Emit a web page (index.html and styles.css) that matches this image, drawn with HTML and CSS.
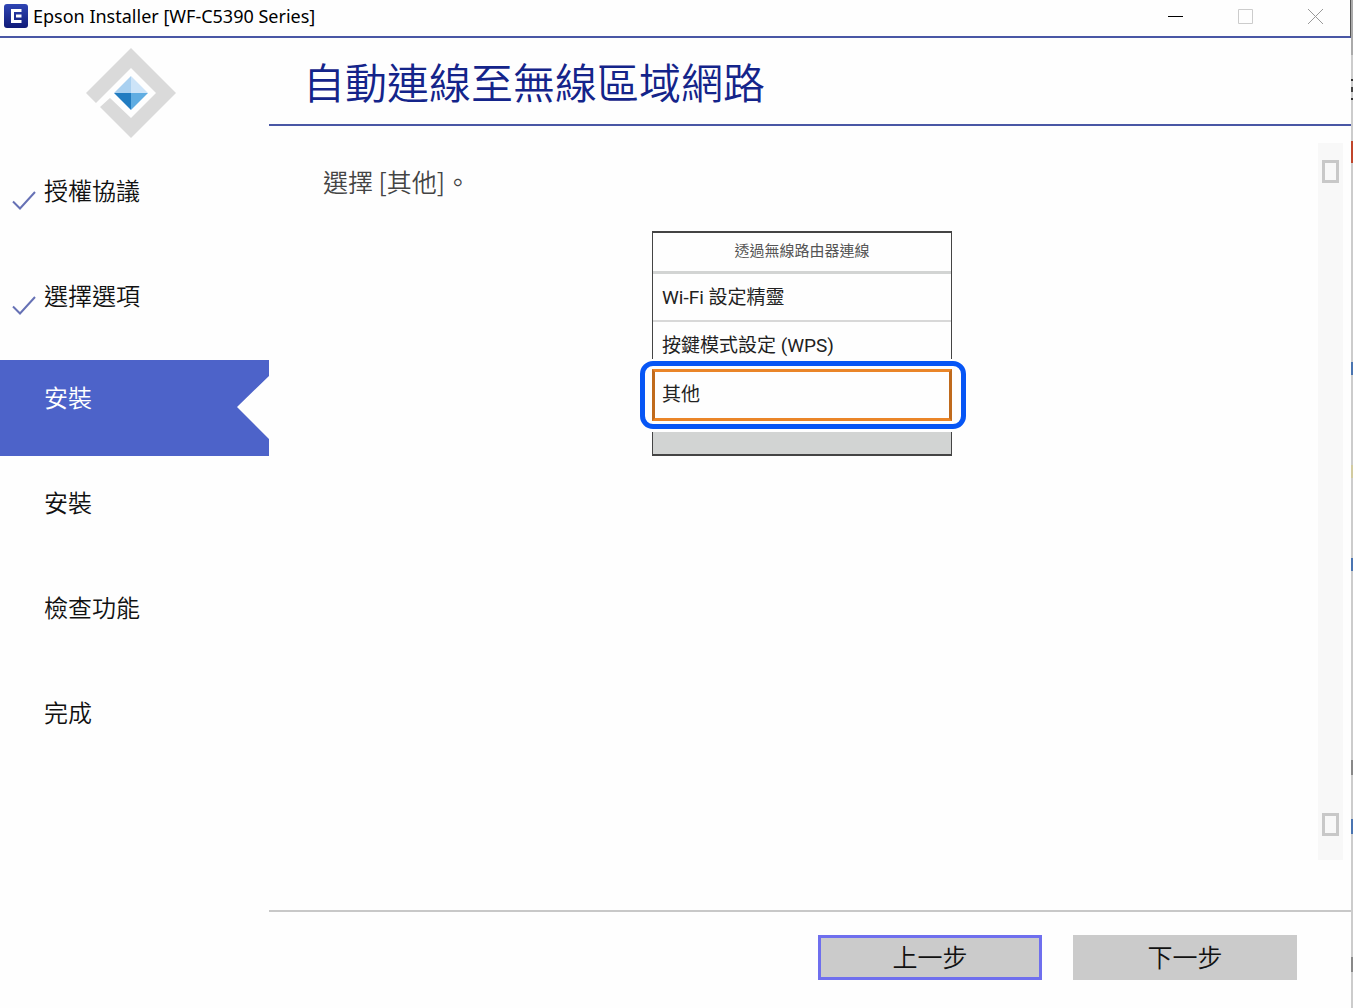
FILE: index.html
```html
<!DOCTYPE html>
<html lang="zh-Hant">
<head>
<meta charset="utf-8">
<title>Epson Installer [WF-C5390 Series]</title>
<link rel="stylesheet" href="styles.css">
</head>
<body>
<div class="desktop">
  <div class="window">
    <header class="titlebar">
      <svg class="app-icon" viewBox="0 0 24 24" aria-hidden="true">
        <defs><linearGradient id="badge" x1="0" y1="0" x2="0" y2="1"><stop offset="0" stop-color="#2f45b4"/><stop offset="1" stop-color="#101b78"/></linearGradient></defs>
        <rect width="24" height="24" rx="3" fill="url(#badge)"/>
        <path d="M17.500 6.500H8.500V17.500H17.500" fill="none" stroke="#fff" stroke-width="3"/>
        <path d="M12 12H17.500" stroke="#fff" stroke-width="3"/>
      </svg>
      <span class="window-title">Epson Installer [WF-C5390 Series]</span>
      <div class="window-controls">
        <button class="control control-min" type="button" aria-label="最小化"><svg viewBox="0 0 15 15"><path d="M0 7.500H15"/></svg></button>
        <button class="control control-max" type="button" aria-label="最大化" disabled><svg viewBox="0 0 15 15"><path d="M.5.5h14v14H.5z"/></svg></button>
        <button class="control control-close" type="button" aria-label="關閉" disabled><svg viewBox="0 0 15 15"><path d="M0 0L15 15M15 0L0 15"/></svg></button>
      </div>
    </header>
    <div class="body">
      <nav class="sidebar">
        <svg class="logo" viewBox="0 0 90 90" aria-hidden="true">
          <path d="M45 0L90 45L45 90L14 59L24 50L45 70L70 45L45 20L10 55L0 45Z" fill="#dadada"/>
          <path d="M45 28V45H28Z" fill="#a9d0f0"/>
          <path d="M45 28V45H62Z" fill="#cde4f8"/>
          <path d="M45 62V45H28Z" fill="#217cc1"/>
          <path d="M45 62V45H62Z" fill="#60ade2"/>
        </svg>
        <ol class="steps">
          <li class="step step-done"><svg class="check" viewBox="0 0 24 20"><path d="M1 10.500L8 17.500L23 1"/></svg>授權協議</li>
          <li class="step step-done"><svg class="check" viewBox="0 0 24 20"><path d="M1 10.500L8 17.500L23 1"/></svg>選擇選項</li>
          <li class="step step-current" aria-current="step">安裝</li>
          <li class="step">安裝</li>
          <li class="step">檢查功能</li>
          <li class="step">完成</li>
        </ol>
      </nav>
      <main class="main">
        <h1 class="heading">自動連線至無線區域網路</h1>
        <div class="scroll-area">
          <section class="content">
            <p class="instruction">選擇 [其他]。</p>
            <div class="panel">
              <div class="panel-title">透過無線路由器連線</div>
              <div class="panel-row">Wi-Fi 設定精靈</div>
              <div class="panel-row panel-row-last">按鍵模式設定 (WPS)</div>
              <div class="panel-choice">其他</div>
              <div class="panel-foot"></div>
              <div class="panel-ring"></div>
            </div>
          </section>
          <div class="scrollbar">
            <button class="scroll-button" type="button" aria-label="向上捲動"></button>
            <button class="scroll-button" type="button" aria-label="向下捲動"></button>
          </div>
        </div>
        <footer class="footer">
          <button class="action action-focus" type="button">上一步</button>
          <button class="action" type="button">下一步</button>
        </footer>
      </main>
    </div>
  </div>
  <div class="behind"></div>
</div>
</body>
</html>
```
FILE: styles.css
```css
* {
  box-sizing: border-box;
}

body {
  margin: 0;
  background: #fefefe;
  color: #111;
  font-family: "Noto Sans CJK TC", sans-serif;
  font-weight: 350;
}

button {
  margin: 0;
  padding: 0;
  border: 0;
  background: none;
  font: inherit;
  color: inherit;
}

.desktop {
  display: flex;
  min-height: 100vh;
}

.window {
  display: flex;
  flex: 1;
  flex-direction: column;
}

/* Sliver of the window behind this one */
.behind {
  width: 2px;
  background: linear-gradient(#aaa 0 55px, #ccc 55px 79px, #333 79px 81px, #ccc 81px 87px, #444 87px 92px, #ccc 92px 98px, #333 98px 100px, #ccc 100px 141px, #c0452b 141px 163px, #ccc 163px 362px, #4a74b0 362px 375px, #ccc 375px 465px, #d2cba0 465px 478px, #ccc 478px 558px, #4a74b0 558px 571px, #ccc 571px 760px, #888 760px 775px, #ccc 775px 819px, #4a74b0 819px 834px, #ccc 834px 957px, #888 957px 972px, #ccc 972px);
}

.titlebar {
  display: flex;
  align-items: center;
  height: 38px;
  padding: 0 27px 4px 4px;
  border-right: 1px solid #555;
  border-bottom: 2px solid #4957a5;
}

.app-icon {
  width: 24px;
  height: 24px;
}

.window-title {
  margin-left: 5px;
  color: #000;
  font: 400 18px/24px "Noto Sans", sans-serif;
}

.window-controls {
  display: flex;
  gap: 55px;
  margin-left: auto;
}

.control {
  width: 15px;
  height: 15px;
}

.control svg {
  display: block;
  width: 15px;
  height: 15px;
  fill: none;
  stroke: #000;
}

.control-max svg {
  stroke: #ccc;
}

.control-close svg {
  stroke: #999;
}

.body {
  display: flex;
  flex: 1;
}

.sidebar {
  width: 269px;
  padding-top: 10px;
}

.logo {
  display: block;
  width: 90px;
  height: 90px;
  margin-left: 86px;
}

.steps {
  display: flex;
  flex-direction: column;
  gap: 9px;
  margin: 12px 0 0;
  padding: 0;
  list-style: none;
}

.step {
  position: relative;
  height: 96px;
  padding: 19px 0 0 44px;
  font-size: 24px;
  line-height: 36px;
}

.step-done {
  padding-top: 22px;
}

.check {
  position: absolute;
  top: 41px;
  left: 12px;
  width: 24px;
  height: 20px;
  fill: none;
  stroke: #6671b5;
  stroke-width: 2;
}

.step-current {
  background: #4d63c9;
  color: #fff;
  clip-path: polygon(0 0, 100% 0, 100% 16px, calc(100% - 32px) 47px, 100% 79px, 100% 100%, 0 100%);
}

.main {
  display: flex;
  flex: 1;
  flex-direction: column;
}

.heading {
  height: 88px;
  margin: 0;
  padding: 13px 34px 0;
  border-bottom: 2px solid #4957a5;
  color: #14248a;
  font-size: 42px;
  font-weight: 350;
  line-height: 60px;
}

.scroll-area {
  display: flex;
  flex: 1;
  padding: 17px 8px 50px 54px;
}

.content {
  flex: 1;
  padding: 20px 37px 0 0;
}

.instruction {
  margin: 0;
  color: #444;
  font-size: 25px;
  line-height: 36px;
}

.panel {
  position: relative;
  width: 300px;
  margin: 32px auto 0;
  color: #222;
  font-family: Roboto, "Noto Sans CJK TC", sans-serif;
  font-size: 19px;
  font-weight: 400;
}

.panel-title,
.panel-row {
  border: solid #444;
  border-width: 0 1px;
}

.panel-title {
  height: 43px;
  border-top: 2px solid #444;
  box-shadow: inset 0 -3px #d2d4d3;
  color: #555;
  font-size: 15px;
  line-height: 36px;
  text-align: center;
}

.panel-row {
  height: 48px;
  padding-left: 9px;
  box-shadow: inset 0 -2px #d8d8d8;
  line-height: 48px;
}

.panel-row-last {
  height: 37px;
  box-shadow: none;
}

.panel-choice {
  height: 52px;
  margin-top: 10px;
  padding-left: 7px;
  border: 3px solid #ea8528;
  border-right-color: #c06a1c;
  border-left-color: #c06a1c;
  line-height: 46px;
}

.panel-foot {
  height: 24px;
  margin-top: 11px;
  border: solid #444;
  border-width: 0 1px 2px;
  background: #d2d4d3;
}

.panel-ring {
  position: absolute;
  top: 130px;
  right: -14px;
  left: -12px;
  height: 68px;
  border: 5px solid #0756f5;
  border-radius: 13px;
}

.scrollbar {
  display: flex;
  flex-direction: column;
  justify-content: space-between;
  align-items: center;
  width: 25px;
  padding: 17px 0 24px;
  background: #f8f8f8;
}

.scroll-button {
  width: 17px;
  height: 23px;
  border: 3px solid #c8c8c8;
}

.footer {
  display: flex;
  justify-content: flex-end;
  gap: 31px;
  height: 98px;
  padding: 23px 54px 0;
  border-top: 2px solid #c8c8c8;
}

.action {
  width: 224px;
  height: 45px;
  padding-bottom: 4px;
  border: 0 solid #6f6fee;
  background: #cbcbcb;
  font-size: 25px;
}

.action-focus {
  border-width: 3px;
}
```
